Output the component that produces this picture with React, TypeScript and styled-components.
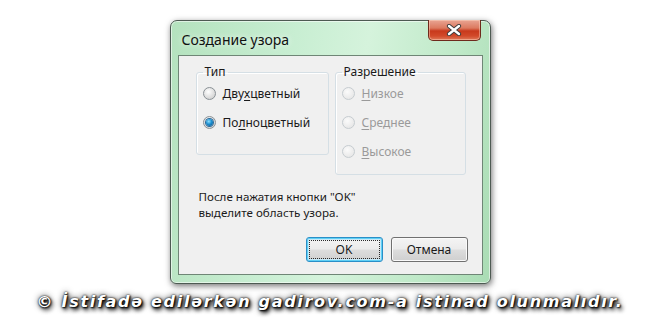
import styled, { createGlobalStyle } from "styled-components";

const GlobalStyle = createGlobalStyle`
    html, body {
        margin: 0;
        padding: 0;
        background: #ffffff;
    }
`;

const Page = styled.div`
    width: 660px;
    height: 330px;
    display: flex;
    flex-direction: column;
    align-items: center;
    padding-top: 20px;
    box-sizing: border-box;
    font-family: "Noto Sans", "Open Sans", sans-serif;
`;

const Window = styled.div`
    width: 321px;
    height: 264px;
    box-sizing: border-box;
    border: 1px solid #4d5a52;
    border-radius: 7px 7px 6px 6px;
    background: linear-gradient(
        100deg,
        #b4e2be 0%,
        #c8eed2 35%,
        #d5f3dc 55%,
        #bfe9c8 80%,
        #a9dcb4 100%
    );
    box-shadow: 1px 2px 6px rgba(0, 0, 0, 0.55),
        inset 0 0 0 1px rgba(255, 255, 255, 0.55);
    display: flex;
    flex-direction: column;
    padding: 0 7px 8px 7px;
`;

const TitleBar = styled.div`
    height: 34px;
    display: flex;
    justify-content: space-between;
    align-items: flex-start;
`;

const Title = styled.span`
    font-size: 14px;
    color: #111;
    margin-top: 9px;
    margin-left: 4px;
    text-shadow: 0 0 6px rgba(255, 255, 255, 0.9);
`;

const CloseButton = styled.div`
    width: 53px;
    height: 21px;
    margin-right: 2px;
    margin-top: -1px;
    box-sizing: border-box;
    border: 1px solid #6e2a1c;
    border-top: none;
    border-radius: 0 0 5px 5px;
    background: linear-gradient(
        180deg,
        #e9a593 0%,
        #dc7a60 40%,
        #c8391c 55%,
        #d24a2a 80%,
        #e07a5a 100%
    );
    box-shadow: inset 0 0 0 1px rgba(255, 220, 200, 0.45);
    display: flex;
    align-items: center;
    justify-content: center;
`;

const Client = styled.div`
    flex: 1;
    border: 1px solid #6f8676;
    background: #f0f0f0;
    display: flex;
    flex-direction: column;
    padding: 9px 14px 12px 17px;
    font-size: 12px;
    color: #1a1a1a;
`;

const GroupRow = styled.div`
    display: flex;
    align-items: flex-start;
    gap: 6px;
`;

const Group = styled.fieldset<{ w: number; h: number }>`
    width: ${(p) => p.w}px;
    height: ${(p) => p.h}px;
    box-sizing: border-box;
    margin: 0;
    padding: 0 6px;
    border: 1px solid #d5dfe5;
    border-radius: 3px;
    box-shadow: inset 1px 1px 0 #ffffff;
    display: flex;
    flex-direction: column;
    gap: 10px;
`;

const Legend = styled.legend`
    padding: 0 2px;
    font-size: 12px;
    color: #1a1a1a;
    line-height: 14px;
`;

const Option = styled.label<{ disabled?: boolean }>`
    display: flex;
    align-items: center;
    gap: 7px;
    height: 19px;
    color: ${(p) => (p.disabled ? "#9a9a9a" : "#1a1a1a")};
    &:first-of-type {
        margin-top: 5px;
    }
    u {
        text-decoration-thickness: 1px;
        text-underline-offset: 2px;
    }
`;

const Radio = styled.span<{ checked?: boolean; disabled?: boolean }>`
    width: 13px;
    height: 13px;
    box-sizing: border-box;
    border-radius: 50%;
    border: 1px solid ${(p) => (p.disabled ? "#c6ccd0" : "#8a9196")};
    background: ${(p) =>
        p.disabled
            ? "radial-gradient(circle at 40% 35%, #fbfbfb 0%, #e9e9e9 70%)"
            : "radial-gradient(circle at 40% 35%, #ffffff 0%, #dcdcdc 60%, #c8c8c8 100%)"};
    display: flex;
    align-items: center;
    justify-content: center;
    &::after {
        content: "";
        display: ${(p) => (p.checked ? "block" : "none")};
        width: 7px;
        height: 7px;
        border-radius: 50%;
        background: radial-gradient(
            circle at 40% 35%,
            #8fe0ff 0%,
            #1b8fd0 45%,
            #0a4f86 100%
        );
        box-shadow: 0 0 0 1px #2b6a9a;
    }
`;

const Message = styled.div`
    margin: 14px 0 0 3px;
    display: flex;
    flex-direction: column;
    font-size: 11.6px;
    color: #1a1a1a;
`;

const MessageLine = styled.span`
    height: 16px;
    line-height: 16px;
`;

const ButtonRow = styled.div`
    margin-top: auto;
    display: flex;
    justify-content: flex-end;
    gap: 8px;
`;

const Button = styled.button<{ focused?: boolean }>`
    width: 77px;
    height: 25px;
    box-sizing: border-box;
    font-family: "Noto Sans", "Open Sans", sans-serif;
    font-size: 12px;
    color: #1a1a1a;
    border-radius: 3px;
    border: 1px solid ${(p) => (p.focused ? "#2a8fc8" : "#707070")};
    background: linear-gradient(180deg, #f4f4f4 0%, #ebebeb 48%, #dddddd 52%, #cfcfcf 100%);
    box-shadow: ${(p) =>
        p.focused
            ? "inset 0 0 0 1px #5fd0f5, inset 0 0 0 2px #c6e8f7"
            : "inset 0 0 0 1px #fafafa"};
    outline: ${(p) => (p.focused ? "1px dotted #2a2a2a" : "none")};
    outline-offset: -4px;
    padding: 0;
`;

const Footer = styled.div`
    margin-top: 8px;
    font-family: "DejaVu Sans", Verdana, sans-serif;
    font-weight: bold;
    font-style: italic;
    font-size: 16px;
    letter-spacing: 1.7px;
    color: #ffffff;
    white-space: nowrap;
    text-shadow: 0 0 2px #000, 1px 1px 2px #000, 2px 3px 4px #000,
        0 0 6px rgba(0, 0, 0, 0.85);
`;

const CloseIcon = () => (
    <svg width="16" height="12" viewBox="0 0 16 12">
        <path
            d="M3 2 L13 10 M13 2 L3 10"
            stroke="#3b3b3b"
            strokeWidth="4.2"
            strokeLinecap="round"
        />
        <path
            d="M3 2 L13 10 M13 2 L3 10"
            stroke="#ffffff"
            strokeWidth="2.4"
            strokeLinecap="round"
        />
    </svg>
);

export default function App() {
    return (
        <Page>
            <GlobalStyle />
            <Window>
                <TitleBar>
                    <Title>Создание узора</Title>
                    <CloseButton>
                        <CloseIcon />
                    </CloseButton>
                </TitleBar>
                <Client>
                    <GroupRow>
                        <Group w={133} h={90}>
                            <Legend>Тип</Legend>
                            <Option>
                                <Radio />
                                <span>
                                    Дву<u>х</u>цветный
                                </span>
                            </Option>
                            <Option>
                                <Radio checked />
                                <span>
                                    По<u>л</u>ноцветный
                                </span>
                            </Option>
                        </Group>
                        <Group w={131} h={110}>
                            <Legend>Разрешение</Legend>
                            <Option disabled>
                                <Radio disabled />
                                <span>
                                    <u>Н</u>изкое
                                </span>
                            </Option>
                            <Option disabled>
                                <Radio disabled />
                                <span>
                                    <u>С</u>реднее
                                </span>
                            </Option>
                            <Option disabled>
                                <Radio disabled />
                                <span>
                                    <u>В</u>ысокое
                                </span>
                            </Option>
                        </Group>
                    </GroupRow>
                    <Message>
                        <MessageLine>После нажатия кнопки "OK"</MessageLine>
                        <MessageLine>выделите область узора.</MessageLine>
                    </Message>
                    <ButtonRow>
                        <Button focused>OK</Button>
                        <Button>Отмена</Button>
                    </ButtonRow>
                </Client>
            </Window>
            <Footer>© İstifadə edilərkən gadirov.com-a istinad olunmalıdır.</Footer>
        </Page>
    );
}
